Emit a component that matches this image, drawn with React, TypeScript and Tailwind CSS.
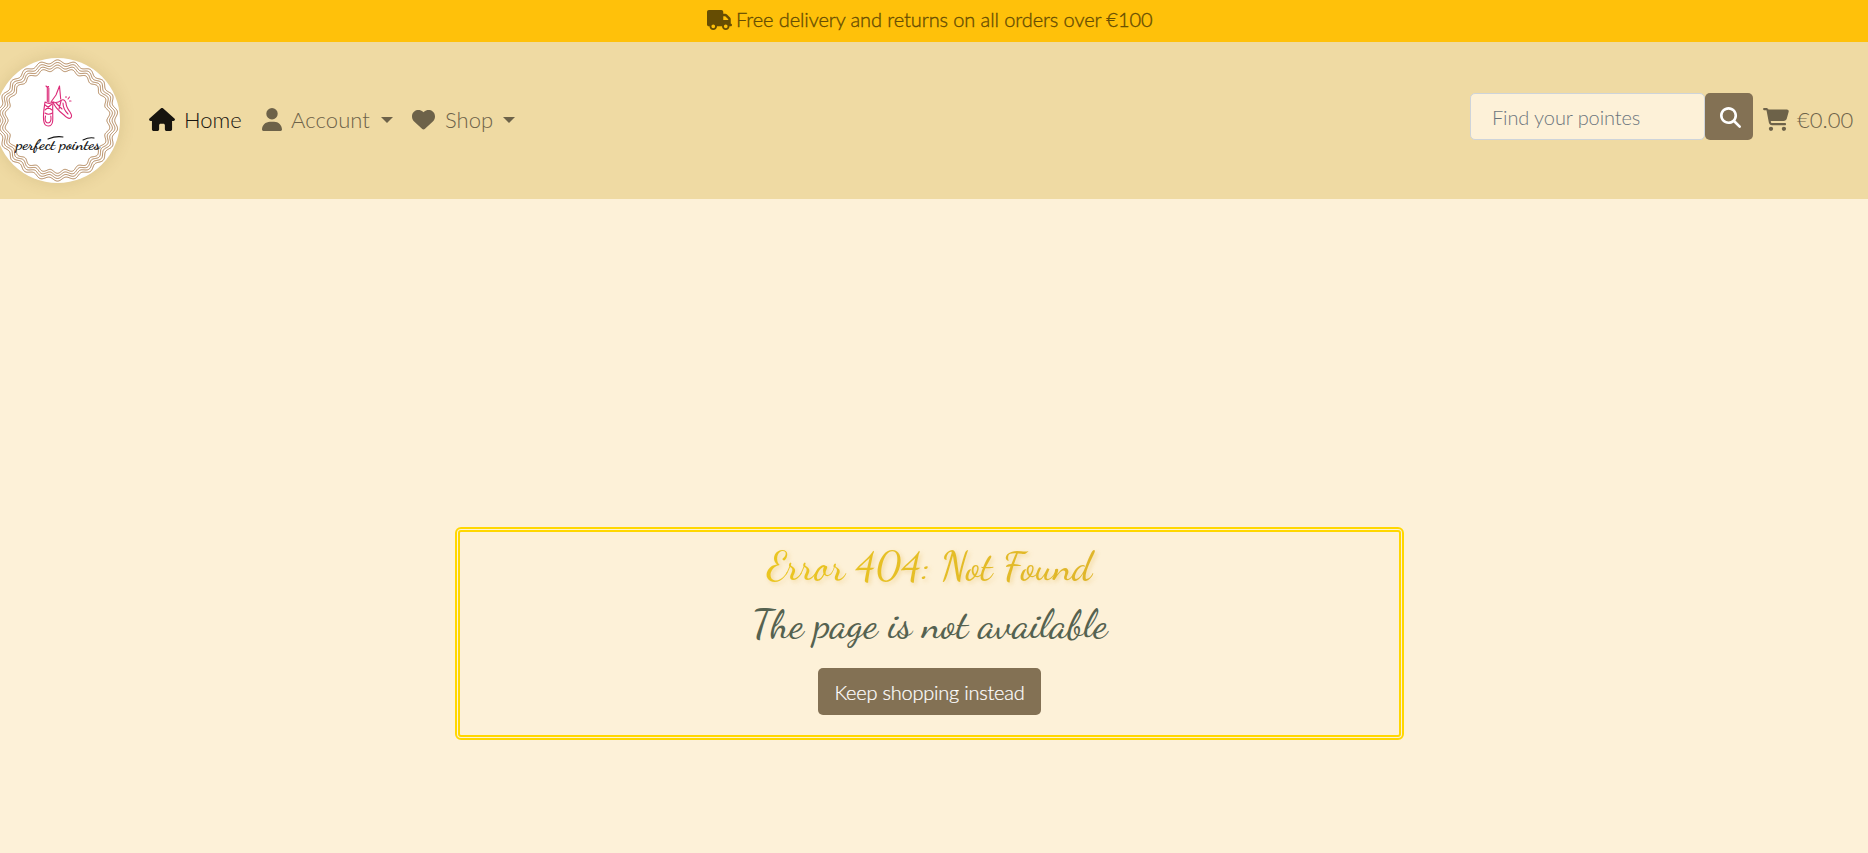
import { FaHouse, FaUser, FaHeart, FaTruck, FaMagnifyingGlass, FaCartShopping } from "react-icons/fa6";

function wave(radius: number, amplitude: number, lobes: number) {
  const points: string[] = [];
  for (let i = 0; i < 480; i++) {
    const a = (i / 480) * Math.PI * 2;
    const r = radius + amplitude * Math.cos(a * lobes);
    points.push(`${(62.5 + r * Math.sin(a)).toFixed(2)} ${(62.5 - r * Math.cos(a)).toFixed(2)}`);
  }
  return `M${points.join("L")}Z`;
}

function Logo() {
  return (
    <a href="#" className="-ml-[5px] block size-[125px] shrink-0 rounded-full bg-white shadow-[0_0_16px_rgba(120,90,30,0.16)]">
      <svg viewBox="0 0 125 125" className="size-full" fill="none">
        {[58.9, 56.3, 53.7, 51.1].map((r) => (
          <path key={r} d={wave(r, 1.7, 22)} stroke="#a9794a" strokeWidth="0.9" />
        ))}
        <g stroke="#dc2a78" strokeWidth="1.1" strokeLinecap="round" strokeLinejoin="round">
          <path d="M51 28l1.500 1.500 1-1M52.300 29.500v14M53.800 30v14M64.500 28l-3.500 9-5 7M64.500 28l1.200 13" />
          <path d="M50 44c-.8 6-2 11-1.400 18 .4 4 1.600 6 4.600 6s4.200-2 4.500-5c.4-6-.5-12 .3-19-2 1.500-5.500 1.500-8 0z" />
          <path d="M50 47l7 5M57 46l-7 6M50 55c2 1.500 5 1.500 7.500 0M50.500 58c-1 4 0 7 2.500 7s3.500-3 2.800-7" />
          <path d="M58 44c2 6 6 9 11 13 3 3 5 4 6.500 3s1.500-3-.5-6c-3-4-4-6-4-9-1-3-3-4-5-2.500-2 1.500-5 2.500-8 1.500z" />
          <path d="M61 45l6 6M66 43l-2 8M68 45c0 5 2 8 5 11M71 39.500v-1M73 41l1.500-2M74.500 43h1.500" />
        </g>
        <text
          x="21"
          y="91"
          textLength="84"
          lengthAdjust="spacingAndGlyphs"
          fontSize="14"
          fontWeight="700"
          fill="#111"
          className="[font-family:'Dancing_Script',cursive]"
        >
          perfect pointes
        </text>
        <path d="M53 81c5-2 10-3 15-2M88 82c4-2 7-3 11-2" stroke="#111" strokeWidth="1.1" strokeLinecap="round" />
      </svg>
    </a>
  );
}

function Caret() {
  return <span className="ml-[11px] mt-px inline-block border-x-[6px] border-t-[6px] border-x-transparent border-t-[#6d6249]" />;
}

export default function App() {
  return (
    <div className="flex h-[853px] w-full flex-col overflow-hidden bg-[#fdf1d8] text-[22px] font-light [font-family:Lato,sans-serif]">
      <div className="flex h-[42px] items-center justify-center bg-[#ffc10a] pb-[4px] pr-[9px] text-[20px] text-[#664d03]">
        <FaTruck className="mr-[4px] mt-px h-[20px] w-[25px]" />
        <span className="w-[416px] whitespace-nowrap tracking-[-0.09px] [-webkit-text-stroke:0.35px_#664d03]">
          Free delivery and returns on all orders over €100
        </span>
      </div>
      <nav className="flex h-[157px] items-center bg-[#efdaa3] text-[#6d6249]">
        <Logo />
        <a href="#" className="mb-[2px] ml-[29px] flex items-center text-[#17140f]">
          <FaHouse className="h-[23px] w-[26px]" />
          <span className="ml-[9px] w-[58px] whitespace-nowrap">Home</span>
        </a>
        <a href="#" className="mb-[2px] ml-[20px] flex items-center">
          <FaUser className="h-[23px] w-[20px]" />
          <span className="ml-[9px] w-[79px] whitespace-nowrap tracking-[0.1px]">Account</span>
          <Caret />
        </a>
        <a href="#" className="mb-[2px] ml-[19px] flex items-center">
          <FaHeart className="size-[23px]" />
          <span className="ml-[10px] w-[47px] whitespace-nowrap">Shop</span>
          <Caret />
        </a>
        <form className="mb-[9px] ml-auto flex">
          <input
            placeholder="Find your pointes"
            className="h-[47px] w-[235px] rounded-[5px] border border-[#ced4da] bg-[#fdf1d8] px-[21px] pt-[2px] text-[20px] tracking-[-0.1px] placeholder:text-[#6c757d]"
          />
          <button type="button" className="flex h-[47px] w-[48px] items-center justify-center rounded-[5px] bg-[#837154] pl-[3px] pt-[2px] text-white">
            <FaMagnifyingGlass className="size-[21px]" />
          </button>
        </form>
        <a href="#" className="mb-[2px] ml-[10px] mr-[13px] flex items-center">
          <FaCartShopping className="h-[23px] w-[26px]" />
          <span className="ml-[8px] w-[58px] whitespace-nowrap">€0.00</span>
        </a>
      </nav>
      <main className="flex flex-col pt-[328px]">
        <section className="ml-[455px] flex h-[213px] w-[949px] flex-col items-center rounded-[6px] border-[5px] border-double border-[#ffd700] text-[40.5px] font-medium [font-family:'Dancing_Script',cursive]">
          <h1 className="mt-[6px] flex h-[56px] items-center">
            <span className="bg-gradient-to-r from-[#ebc620] to-[#dfb52a] bg-clip-text px-2 text-transparent [filter:drop-shadow(2px_2px_2px_rgba(218,165,32,0.3))]">
              Error 404: Not Found
            </span>
          </h1>
          <h2 className="flex h-[60px] items-center text-[#556250]">The page is not available</h2>
          <button className="mt-[14px] h-[47px] w-[223px] whitespace-nowrap rounded-[5px] bg-[#837154] text-[20px] font-light tracking-[-0.23px] text-white [font-family:Lato,sans-serif] [-webkit-text-stroke:0.2px_#fff]">
            Keep shopping instead
          </button>
        </section>
      </main>
    </div>
  );
}
